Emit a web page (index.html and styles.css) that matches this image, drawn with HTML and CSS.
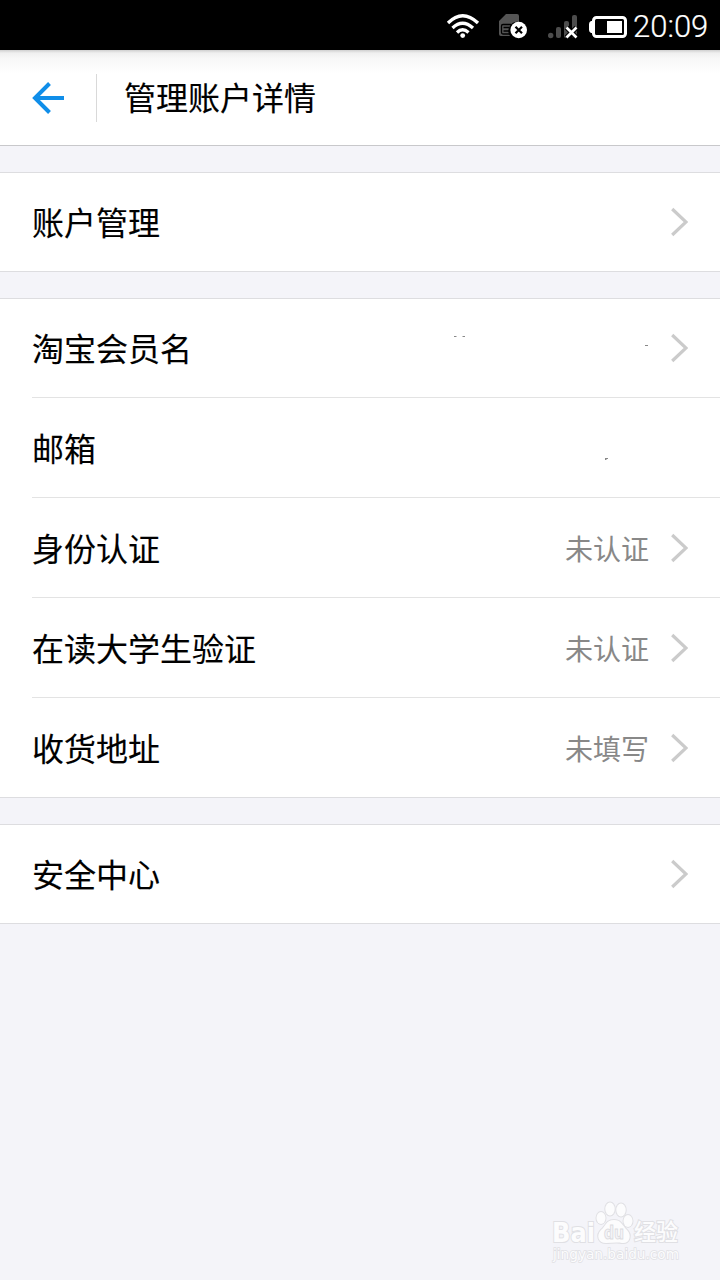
FILE: index.html
```html
<!DOCTYPE html>
<html lang="zh-CN">
<head>
    <meta charset="UTF-8">
    <meta name="viewport" content="width=device-width, initial-scale=1.0">
    <title>管理账户详情</title>
    <link rel="stylesheet" href="styles.css">
</head>
<body>
    <svg width="0" height="0" class="symbols">
        <symbol id="chevron" viewBox="0 0 18 30">
            <path d="M2.200 2 L16 15 L2.200 28" fill="none" stroke="#cbcbcb" stroke-width="3.200"/>
        </symbol>
    </svg>

    <div class="statusbar">
        <svg class="status-icons" width="192" height="50" viewBox="440 0 192 50">
            <!-- wifi -->
            <g fill="none" stroke="#fff" stroke-width="3.300">
                <path d="M448 23 Q462.500 8.500 478 23"/>
                <path d="M452.500 28 Q462.500 18.500 473 28"/>
                <path d="M457 32.500 Q462.500 27 468.500 32.500"/>
            </g>
            <circle cx="462.700" cy="35.600" r="2.400" fill="#fff"/>
            <!-- sim card -->
            <path d="M499 21 L506 14 H517 Q519 14 519 16 V22 A9 9 0 0 0 510 36 H501 Q499 36 499 34 Z" fill="#555"/>
            <path d="M511 24.500 H503 Q501.500 24.500 501.500 26 V32.500 Q501.500 34 503 34 H510 M503.500 27.500 H509 M503.500 31 H509" fill="none" stroke="#000" stroke-width="1.300"/>
            <circle cx="518.700" cy="30" r="8.300" fill="#fff"/>
            <path d="M515.500 26.700 L522 33.200 M522 26.700 L515.500 33.200" stroke="#000" stroke-width="2.200"/>
            <!-- signal -->
            <g fill="#4d4d4d">
                <circle cx="550.700" cy="35.500" r="2.700"/>
                <rect x="556" y="27" width="5" height="11" rx="2"/>
                <rect x="564" y="21" width="5" height="17" rx="2"/>
                <rect x="572" y="15" width="5" height="23" rx="2"/>
            </g>
            <path d="M566.500 27.500 L576.500 37.500 M576.500 27.500 L566.500 37.500" stroke="#000" stroke-width="5"/>
            <path d="M566.500 27.500 L576.500 37.500 M576.500 27.500 L566.500 37.500" stroke="#fff" stroke-width="2.700"/>
            <!-- battery -->
            <rect x="593.500" y="17.500" width="32" height="19" rx="3" fill="none" stroke="#fff" stroke-width="3"/>
            <path d="M593 21 H591 Q589 22 589 24 V30 Q589 32 591 33 H593 Z" fill="#fff"/>
            <rect x="607" y="21" width="15" height="12" fill="#fff"/>
        </svg>
        <span class="clock">20:09</span>
    </div>

    <div class="header">
        <a class="back" href="#">
            <svg width="32" height="32" viewBox="0 0 32 32">
                <path d="M17.500 1.500 L3 16 L17.500 30.500 M3 16 H32" fill="none" stroke="#108ee9" stroke-width="4"/>
            </svg>
        </a>
        <h1>管理账户详情</h1>
    </div>

    <div class="list">
        <div class="row">
            <span class="label">账户管理</span>
            <svg class="arrow"><use href="#chevron"/></svg>
        </div>
    </div>

    <div class="list">
        <div class="row">
            <span class="label">淘宝会员名</span>
            <svg class="value-mark" width="200" height="30" viewBox="449 333 200 30">
                <path d="M454 336.500 H456.500 M462.500 336.500 H465 M645 345.500 H648" stroke="#888" stroke-width="1"/>
            </svg>
            <svg class="arrow"><use href="#chevron"/></svg>
        </div>
        <div class="row">
            <span class="label">邮箱</span>
            <svg class="value-mark no-arrow" width="200" height="30" viewBox="449 433 200 30">
                <path d="M605 458.500 H608 M605 459.500 H606.500" stroke="#888" stroke-width="1"/>
            </svg>
        </div>
        <div class="row">
            <span class="label">身份认证</span>
            <span class="value">未认证</span>
            <svg class="arrow"><use href="#chevron"/></svg>
        </div>
        <div class="row">
            <span class="label">在读大学生验证</span>
            <span class="value">未认证</span>
            <svg class="arrow"><use href="#chevron"/></svg>
        </div>
        <div class="row">
            <span class="label">收货地址</span>
            <span class="value">未填写</span>
            <svg class="arrow"><use href="#chevron"/></svg>
        </div>
    </div>

    <div class="list">
        <div class="row">
            <span class="label">安全中心</span>
            <svg class="arrow"><use href="#chevron"/></svg>
        </div>
    </div>

    <div class="watermark">
        <svg width="150" height="80" viewBox="0 0 150 80">
            <g class="mark">
                <text class="brand" x="12" y="52" textLength="43" lengthAdjust="spacingAndGlyphs">Bai</text>
                <ellipse cx="61" cy="28" rx="4.500" ry="6"/>
                <ellipse cx="70" cy="19" rx="4.700" ry="6.500"/>
                <ellipse cx="81" cy="20" rx="4.700" ry="6.500"/>
                <ellipse cx="88" cy="31" rx="4.500" ry="6"/>
                <path d="M74 30 C66 30 66 36 61 40 C56 45 58 53 66 53 C71 53 77 52 82 53 C90 54 92 45 87 40 C82 35 81 30 74 30 Z"/>
                <text class="cn" x="94" y="50" textLength="44" lengthAdjust="spacingAndGlyphs">经验</text>
                <text class="url" x="13" y="69" textLength="126" lengthAdjust="spacingAndGlyphs">jingyan.baidu.com</text>
            </g>
            <text class="du" x="64" y="49" textLength="20" lengthAdjust="spacingAndGlyphs">du</text>
        </svg>
    </div>
</body>
</html>
```
FILE: styles.css
```css
* {
    margin: 0;
    padding: 0;
    box-sizing: border-box;
}
body {
    min-height: 1280px;
    background-color: #f4f4f9;
    font-family: "Noto Sans CJK SC", sans-serif;
    color: #000;
    display: flex;
    flex-direction: column;
}
.symbols {
    position: absolute;
}
.statusbar {
    height: 50px;
    background-color: #000;
    display: flex;
    justify-content: flex-end;
    padding-right: 11px;
}
.status-icons {
    display: block;
    margin-right: 1px;
}
.clock {
    width: 76px;
    color: #fff;
    font-family: Roboto, sans-serif;
    font-size: 31px;
    font-weight: 300;
    line-height: 54px;
    white-space: nowrap;
    -webkit-text-stroke: 0.2px #fff;
}
.header {
    height: 96px;
    background: linear-gradient(#cfcfcf 0, #efefef 3px, #f7f7f7 8px, #fff 24px);
    border-bottom: 1px solid #c8c8cb;
    display: flex;
    align-items: center;
}
.back {
    width: 97px;
    height: 48px;
    padding-left: 32px;
    border-right: 1px solid #d9d9d9;
    display: flex;
    align-items: center;
}
h1 {
    padding: 0 0 3px 27px;
    font-size: 32px;
    font-weight: 400;
    line-height: 48px;
    -webkit-text-stroke: 0.15px #000;
}
.list {
    margin-top: 26px;
    background-color: #fff;
    border-top: 1px solid #dddde0;
    border-bottom: 1px solid #dddde0;
}
.row {
    height: 100px;
    margin-left: 32px;
    padding-right: 32px;
    border-bottom: 1px solid #e3e3e3;
    display: flex;
    align-items: center;
}
.row:first-child {
    height: 99px;
}
.row:last-child {
    height: 99px;
    border-bottom: none;
}
.row:only-child {
    height: 98px;
}
.label {
    flex: 1;
    padding-bottom: 2px;
    font-size: 32px;
    line-height: 48px;
    -webkit-text-stroke: 0.15px #000;
}
.value {
    font-size: 28px;
    line-height: 42px;
    color: #888;
}
.arrow {
    width: 18px;
    height: 30px;
    margin-left: 21px;
}
.no-arrow {
    margin-right: 39px;
}
.watermark {
    width: 150px;
    height: 80px;
    margin: auto 30px 10px auto;
}
.mark {
    fill: #fcfcfd;
    stroke: #e0e0e4;
    stroke-width: 2px;
    paint-order: stroke;
}
.brand {
    font-family: "DejaVu Sans", sans-serif;
    font-size: 27px;
    font-weight: 700;
}
.cn {
    font-size: 23px;
    font-weight: 500;
}
.url {
    font-family: "DejaVu Sans", sans-serif;
    font-size: 14px;
    stroke-width: 1.5px;
}
.du {
    font-family: "DejaVu Sans", sans-serif;
    font-size: 18px;
    font-weight: 700;
    fill: #f4f4f8;
    stroke: #dcdce0;
    stroke-width: 1px;
}
```
